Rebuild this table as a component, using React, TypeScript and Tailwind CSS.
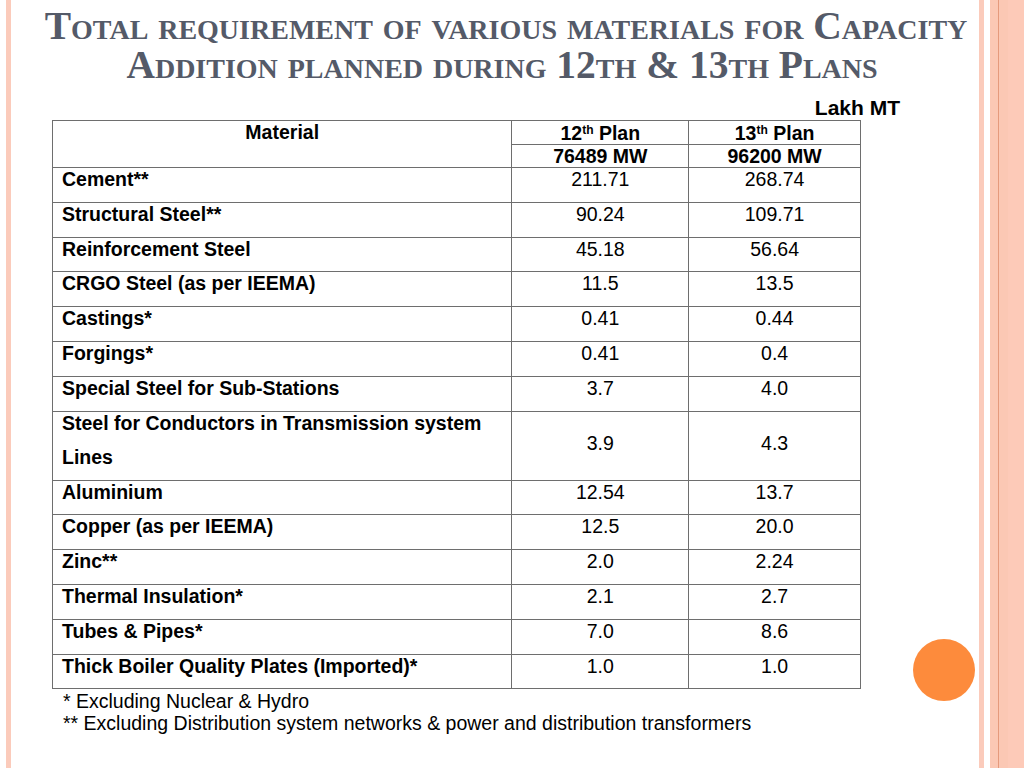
import React from 'react'

const rows: { name: string; a: string; b: string; tall?: boolean }[] = [
  { name: 'Cement**', a: '211.71', b: '268.74' },
  { name: 'Structural Steel**', a: '90.24', b: '109.71' },
  { name: 'Reinforcement Steel', a: '45.18', b: '56.64' },
  { name: 'CRGO Steel (as per IEEMA)', a: '11.5', b: '13.5' },
  { name: 'Castings*', a: '0.41', b: '0.44' },
  { name: 'Forgings*', a: '0.41', b: '0.4' },
  { name: 'Special Steel for Sub-Stations', a: '3.7', b: '4.0' },
  { name: 'Steel for Conductors in Transmission system Lines', a: '3.9', b: '4.3', tall: true },
  { name: 'Aluminium', a: '12.54', b: '13.7' },
  { name: 'Copper (as per IEEMA)', a: '12.5', b: '20.0' },
  { name: 'Zinc**', a: '2.0', b: '2.24' },
  { name: 'Thermal Insulation*', a: '2.1', b: '2.7' },
  { name: 'Tubes & Pipes*', a: '7.0', b: '8.6' },
  { name: 'Thick Boiler Quality Plates (Imported)*', a: '1.0', b: '1.0' },
]

const sans = { fontFamily: '"Liberation Sans", Arial, sans-serif' }

export default function App() {
  return (
    <div className="relative w-[1024px] h-[768px] bg-white overflow-hidden flex" style={sans}>
      {/* left edge stripe */}
      <div className="w-[6px] shrink-0" />
      <div className="w-[5px] shrink-0 bg-[#fbcbbb]" />

      {/* slide body */}
      <div className="flex-1 flex flex-col">
        <h1
          className="text-center text-[#545a68] font-bold text-[39.5px] leading-[39px] pt-[7px] pl-[22px] whitespace-nowrap"
          style={{ fontFamily: '"Liberation Serif", "Times New Roman", serif', fontVariant: 'small-caps' }}
        >
          <div>Total requirement of various materials for Capacity</div>
          <div className="pr-[8px]">Addition planned during 12th &amp; 13th Plans</div>
        </h1>

        <div className="w-[849px] ml-[41px] mt-[11px]">
          <div className="text-right font-bold text-[21px] leading-[24px] text-black pr-[1px]">Lakh MT</div>
          <table className="w-[809px] border-collapse text-black text-[19.5px]">
            <colgroup>
              <col className="w-[460px]" />
              <col className="w-[177px]" />
              <col className="w-[172px]" />
            </colgroup>
            <thead>
              <tr className="h-[24px]">
                <th rowSpan={2} className="border border-[#6e6e6e] align-top font-bold leading-[22px]">
                  Material
                </th>
                <th className="border border-[#6e6e6e] font-bold leading-[22px]">
                  12<sup className="text-[12px]">th</sup> Plan
                </th>
                <th className="border border-[#6e6e6e] font-bold leading-[22px]">
                  13<sup className="text-[12px]">th</sup> Plan
                </th>
              </tr>
              <tr className="h-[23px]">
                <th className="border border-[#6e6e6e] font-bold leading-[20px]">76489 MW</th>
                <th className="border border-[#6e6e6e] font-bold leading-[20px]">96200 MW</th>
              </tr>
            </thead>
            <tbody>
              {rows.map((r) => (
                <tr key={r.name} className={r.tall ? 'h-[69px]' : 'h-[34.8px]'}>
                  <td className="border border-[#6e6e6e] align-top pl-[9px] pr-[6px] font-bold">
                    <div className="leading-[34px] -mt-[6px]">{r.name}</div>
                  </td>
                  <td className={`border border-[#6e6e6e] text-center ${r.tall ? 'align-middle' : 'align-top'}`}>
                    <div className={r.tall ? 'leading-[22px] -mt-[6px]' : 'leading-[34px] -mt-[6px]'}>{r.a}</div>
                  </td>
                  <td className={`border border-[#6e6e6e] text-center ${r.tall ? 'align-middle' : 'align-top'}`}>
                    <div className={r.tall ? 'leading-[22px] -mt-[6px]' : 'leading-[34px] -mt-[6px]'}>{r.b}</div>
                  </td>
                </tr>
              ))}
            </tbody>
          </table>
          <div className="pl-[11px] pt-[1px] text-[19.5px] leading-[22px] text-black">
            <div>* Excluding Nuclear &amp; Hydro</div>
            <div>** Excluding Distribution system networks &amp; power and distribution transformers</div>
          </div>
        </div>
      </div>

      {/* orange bullet circle */}
      <div className="absolute left-[913px] top-[639px] w-[62px] h-[62px] rounded-full bg-[#fd8b3c]" />

      {/* right decorative stripes */}
      <div className="w-[5px] shrink-0 bg-[#fbcbbb]" />
      <div className="w-[6px] shrink-0" />
      <div className="w-[8px] shrink-0 bg-[#fbc8b4]" />
      <div className="w-[1px] shrink-0 bg-[#e59a7c]" />
      <div className="w-[9px] shrink-0 bg-[#fbc8b4]" />
      <div className="w-[16px] shrink-0 bg-[#fdcab8]" />
    </div>
  )
}
